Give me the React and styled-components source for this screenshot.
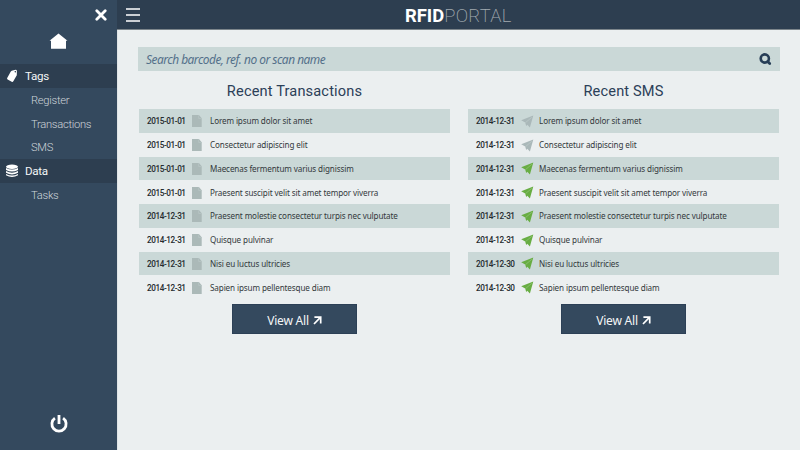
import React from 'react';
import styled, { createGlobalStyle } from 'styled-components';

const GlobalStyle = createGlobalStyle`
  * { box-sizing: border-box; }
  body { margin: 0; background: #ebeff0; font-family: Roboto, sans-serif; }
  svg { display: block; flex: none; }
`;

const Shell = styled.div`
  display: flex;
  width: 800px;
  height: 450px;
  overflow: hidden;
  background: #ebeff0;
`;

const Sidebar = styled.nav`
  display: flex;
  flex-direction: column;
  width: 117px;
  height: 450px;
  background: #34495e;
`;

const CloseRow = styled.div`
  display: flex;
  justify-content: flex-end;
  height: 33px;
  padding: 9px 10px 0 0;
`;

const HomeRow = styled.div`
  display: flex;
  justify-content: center;
  height: 31px;
`;

const NavGroup = styled.div`
  display: flex;
  align-items: center;
  height: 24px;
  padding-left: 5px;
  gap: 6px;
  background: #2d3e50;
  color: #f2f5f6;
  font-size: 11.6px;
  line-height: 26px;
  letter-spacing: -0.3px;
`;

const NavList = styled.div`
  display: flex;
  flex-direction: column;
  padding-left: 31px;
`;

const NavItem = styled.a`
  height: 23.67px;
  line-height: 25px;
  font-size: 11.2px;
  font-weight: 300;
  letter-spacing: -0.28px;
  color: #ced5da;
`;

const PowerRow = styled.div`
  display: flex;
  justify-content: center;
  margin-top: auto;
  height: 36px;
`;

const Main = styled.main`
  display: flex;
  flex-direction: column;
  width: 683px;
  border-left: 1px solid #dfe4e6;
`;

const Header = styled.header`
  display: grid;
  grid-template-columns: 40px 1fr 40px;
  align-items: center;
  height: 30px;
  margin-left: -1px;
  padding-left: 9px;
  background: #2d3e50;
  border-bottom: 1px solid #7c858b;
`;

const Logo = styled.div`
  display: flex;
  width: 107px;
  margin-left: 239px;
  padding-top: 3px;
  font-size: 18.4px;
  line-height: 26px;
  color: #a3abb0;
  font-weight: 200;
  letter-spacing: 0.3px;

  strong { color: #fff; font-weight: 700; letter-spacing: 0; }
`;

const Search = styled.div`
  display: flex;
  align-items: center;
  justify-content: space-between;
  width: 642px;
  height: 24px;
  margin: 17px 0 0 20px;
  padding: 0 8px 0 8px;
  background: #cad8d7;
`;

const Placeholder = styled.span`
  font-family: 'Noto Sans', sans-serif;
  font-style: italic;
  font-size: 11.9px;
  letter-spacing: -0.48px;
  color: #54708a;
`;

const Columns = styled.div`
  display: grid;
  grid-template-columns: 311px 311px;
  column-gap: 18px;
  margin-left: 21px;
`;

const Panel = styled.section`
  display: flex;
  flex-direction: column;
  align-items: center;
`;

const Title = styled.h2`
  height: 38px;
  margin: 0;
  line-height: 40px;
  font-size: 14.6px;
  font-weight: 400;
  letter-spacing: 0.15px;
  color: #2b4058;
`;

const Row = styled.div`
  display: grid;
  grid-template-columns: 45px 18px 1fr;
  align-items: center;
  width: 100%;
  height: 23.75px;
  padding: 1px 0 0 8px;
  background: ${(p) => (p.$striped ? '#cad8d7' : 'transparent')};
`;

const DateCell = styled.time`
  font-size: 8.2px;
  font-weight: 500;
  letter-spacing: -0.42px;
  line-height: 12px;
  white-space: nowrap;
  color: #252b2f;
`;

const Message = styled.span`
  font-family: 'Noto Sans', sans-serif;
  font-size: 8.1px;
  line-height: 12px;
  letter-spacing: -0.11px;
  color: #33393c;
  white-space: nowrap;
`;

const ViewAll = styled.button`
  display: flex;
  align-items: center;
  justify-content: center;
  gap: 4px;
  width: 125px;
  height: 30px;
  margin: 5px 0 0;
  padding: 2px 0 0;
  border: 1px solid #2c4056;
  background: #34495e;
  color: #f4f6f7;
  font-family: 'Noto Sans', sans-serif;
  font-size: 12px;
  letter-spacing: -0.2px;
`;

const CloseIcon = () => (
  <svg width="12" height="12" viewBox="0 0 12 12">
    <path d="M1.8 1.8L10.2 10.2M10.2 1.8L1.8 10.2" stroke="#fff" strokeWidth="2.8" strokeLinecap="round" />
  </svg>
);

const HomeIcon = () => (
  <svg width="19" height="17" viewBox="0 0 19 17">
    <path d="M9.5 .4L18.5 7.8H17V15.7H2V7.8H.5Z" fill="#fff" />
  </svg>
);

const TagIcon = () => (
  <svg width="14" height="14" viewBox="0 0 14 14">
    <path fillRule="evenodd" d="M6.7 1.8L10.6 .8Q11.8 .8 11.9 1.9L11.8 6.2L8.3 12.3Q7.7 13.3 6.7 12.8L2.6 10.6Q1.7 10 2.2 9.1L5.8 2.4ZM10.3 1.9a.7.7 0 1 0 .01 0Z" fill="#fff" />
  </svg>
);

const DatabaseIcon = () => (
  <svg width="14" height="14" viewBox="0 0 14 14">
    <ellipse cx="7" cy="2.8" rx="6" ry="2.2" fill="#fff" />
    <path d="M1 4.1Q7 7.1 13 4.1V6Q7 9.2 1 6ZM1 7.1Q7 10.2 13 7.1V8.8Q7 12 1 8.8ZM1 9.9Q7 13 13 9.9V11.3Q7 14.5 1 11.3Z" fill="#fff" />
  </svg>
);

const MenuIcon = () => (
  <svg width="14" height="15" viewBox="0 0 14 15">
    <path d="M0 2H14M0 8H14M0 14H14" stroke="#fff" strokeWidth="1.5" />
  </svg>
);

const SearchIcon = () => (
  <svg width="13" height="13" viewBox="0 0 13 13">
    <circle cx="5.8" cy="5.5" r="4.1" fill="none" stroke="#263d56" strokeWidth="2.6" />
    <path d="M8.6 8.6L10.7 10.6" stroke="#263d56" strokeWidth="2.8" strokeLinecap="round" />
  </svg>
);

const PowerIcon = () => (
  <svg width="18" height="20" viewBox="0 0 18 20">
    <path d="M4.9 4.2A7.1 7.1 0 1 0 13.1 4.2" fill="none" stroke="#fff" strokeWidth="2.8" />
    <path d="M9 1V10" stroke="#fff" strokeWidth="2.8" />
  </svg>
);

const FileIcon = () => (
  <svg width="10" height="12" viewBox="0 0 10 12">
    <path d="M0 0H6.9L9.7 3.3V12H0Z" fill="#abb9b8" />
    <path d="M6.7 .2V3.5H9.7" fill="none" stroke="#bccac9" strokeWidth=".6" />
  </svg>
);

const PlaneIcon = ({ sent }) => (
  <svg width="13" height="13" viewBox="0 0 13 13">
    <path d="M12.3 .5L.2 5.3L4.2 7.6L5.2 10.9L6.3 9.7L8.9 12.6Z" fill={sent ? '#68ad43' : '#aab8b9'} />
    <path d="M10.8 2.3L4.4 7.7" stroke={sent ? '#a5cf90' : '#c6d2d2'} strokeWidth=".5" />
  </svg>
);

const ArrowIcon = () => (
  <svg width="9" height="9" viewBox="0 0 9 9">
    <path d="M1.4 1.1H7.7V7.4M7.4 1.4L1 8" fill="none" stroke="#fff" strokeWidth="1.7" />
  </svg>
);

const messages = [
  'Lorem ipsum dolor sit amet',
  'Consectetur adipiscing elit',
  'Maecenas fermentum varius dignissim',
  'Praesent suscipit velit sit amet tempor viverra',
  'Praesent molestie consectetur turpis nec vulputate',
  'Quisque pulvinar',
  'Nisi eu luctus ultricies',
  'Sapien ipsum pellentesque diam',
];

function RecentPanel({ title, dateOf, iconOf }) {
  return (
    <Panel>
      <Title>{title}</Title>
      {messages.map((text, i) => (
        <Row key={text} $striped={i % 2 === 0}>
          <DateCell>{dateOf(i)}</DateCell>
          {iconOf(i)}
          <Message>{text}</Message>
        </Row>
      ))}
      <ViewAll>View All <ArrowIcon /></ViewAll>
    </Panel>
  );
}

export default function App() {
  return (
    <>
      <GlobalStyle />
      <Shell>
        <Sidebar>
          <CloseRow><CloseIcon /></CloseRow>
          <HomeRow><HomeIcon /></HomeRow>
          <NavGroup><TagIcon />Tags</NavGroup>
          <NavList>
            <NavItem>Register</NavItem>
            <NavItem>Transactions</NavItem>
            <NavItem>SMS</NavItem>
          </NavList>
          <NavGroup><DatabaseIcon />Data</NavGroup>
          <NavList>
            <NavItem>Tasks</NavItem>
          </NavList>
          <PowerRow><PowerIcon /></PowerRow>
        </Sidebar>
        <Main>
          <Header>
            <MenuIcon />
            <Logo><strong>RFID</strong>PORTAL</Logo>
          </Header>
          <Search>
            <Placeholder>Search barcode, ref. no or scan name</Placeholder>
            <SearchIcon />
          </Search>
          <Columns>
            <RecentPanel
              title="Recent Transactions"
              dateOf={(i) => (i < 4 ? '2015-01-01' : '2014-12-31')}
              iconOf={() => <FileIcon />}
            />
            <RecentPanel
              title="Recent SMS"
              dateOf={(i) => (i < 6 ? '2014-12-31' : '2014-12-30')}
              iconOf={(i) => <PlaneIcon sent={i > 1} />}
            />
          </Columns>
        </Main>
      </Shell>
    </>
  );
}
